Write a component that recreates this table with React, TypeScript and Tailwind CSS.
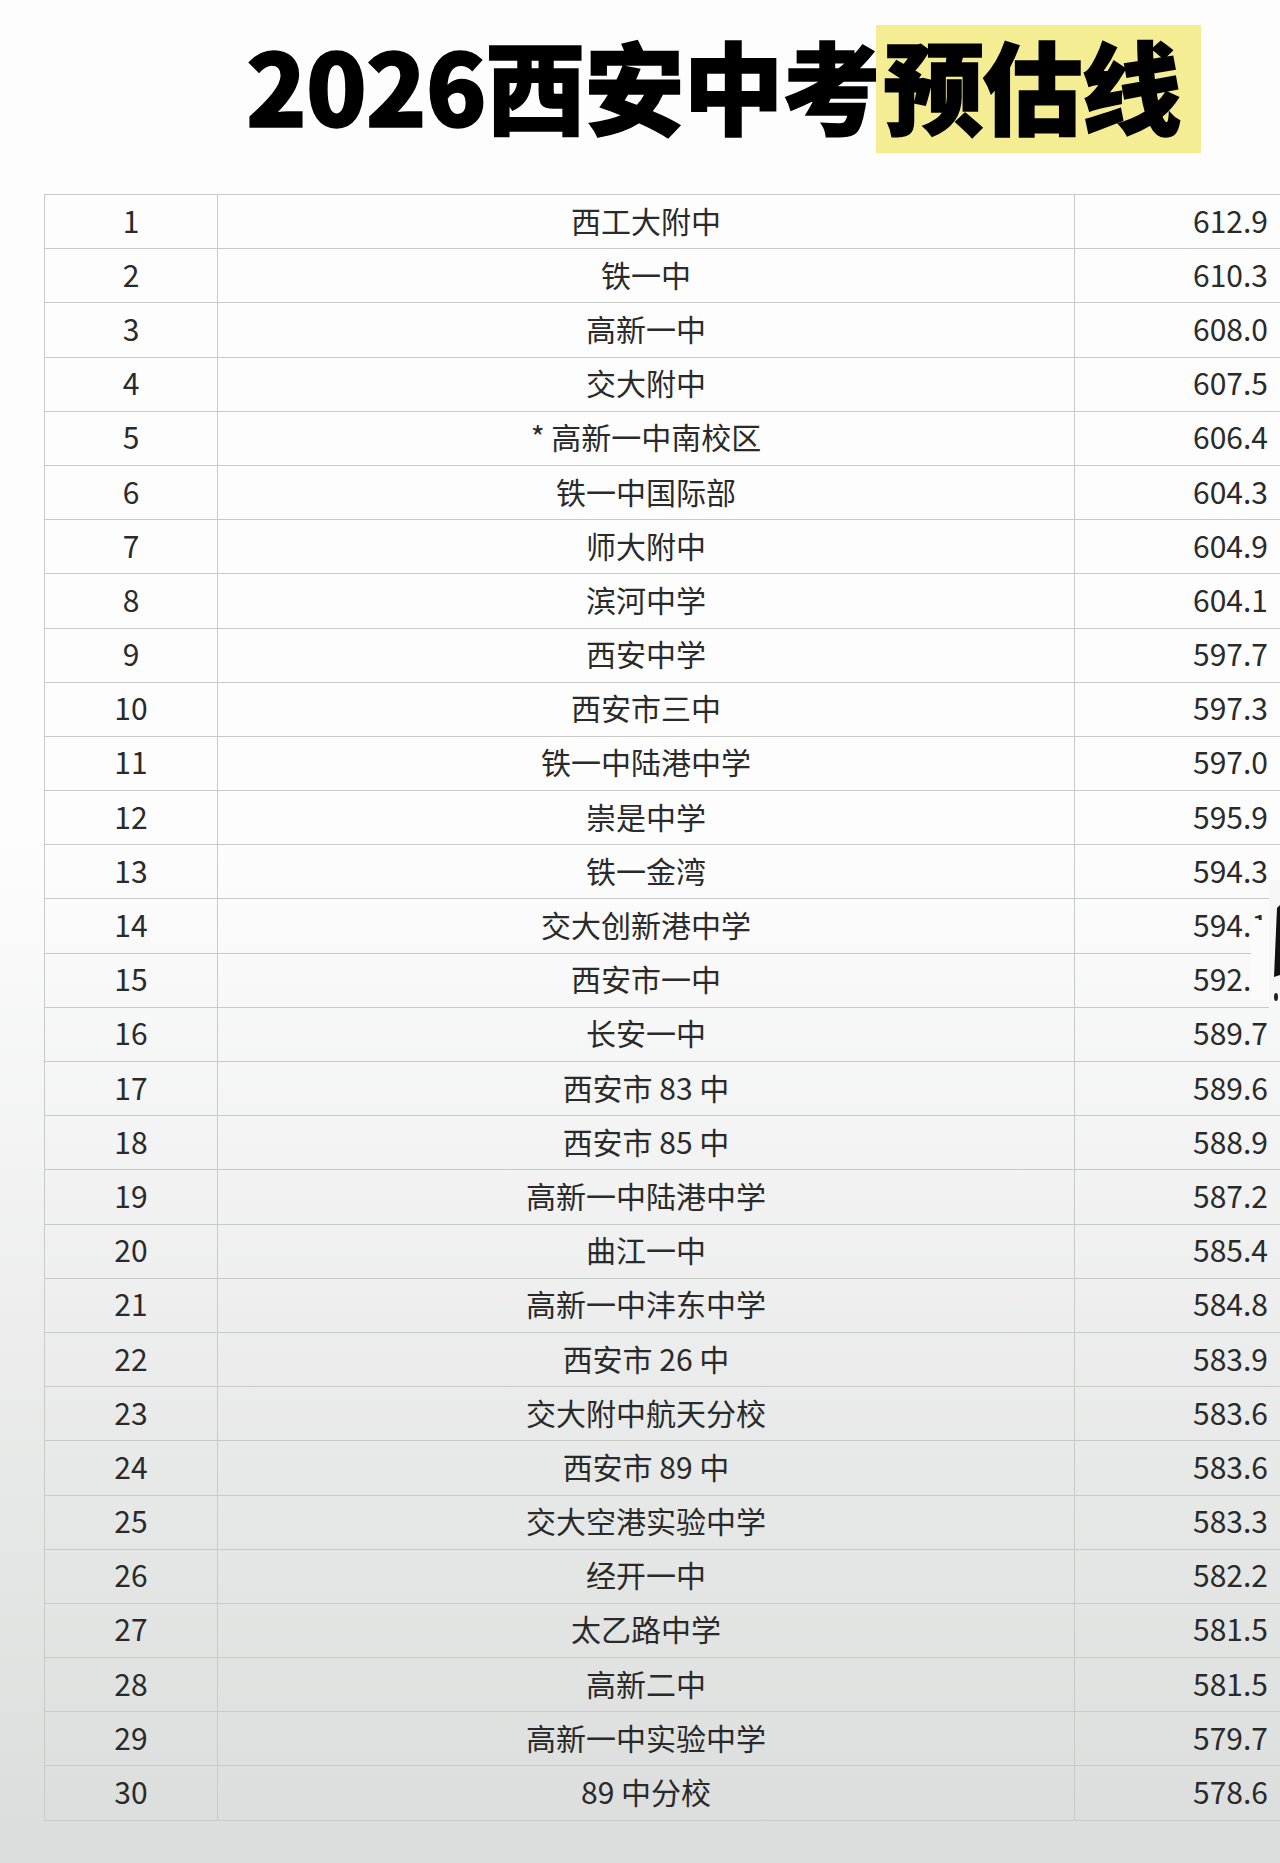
import React from "react";

const rows: [string, string][] = [
  ["西工大附中", "612.9"],
  ["铁一中", "610.3"],
  ["高新一中", "608.0"],
  ["交大附中", "607.5"],
  ["* 高新一中南校区", "606.4"],
  ["铁一中国际部", "604.3"],
  ["师大附中", "604.9"],
  ["滨河中学", "604.1"],
  ["西安中学", "597.7"],
  ["西安市三中", "597.3"],
  ["铁一中陆港中学", "597.0"],
  ["崇是中学", "595.9"],
  ["铁一金湾", "594.3"],
  ["交大创新港中学", "594.1"],
  ["西安市一中", "592.1"],
  ["长安一中", "589.7"],
  ["西安市 83 中", "589.6"],
  ["西安市 85 中", "588.9"],
  ["高新一中陆港中学", "587.2"],
  ["曲江一中", "585.4"],
  ["高新一中沣东中学", "584.8"],
  ["西安市 26 中", "583.9"],
  ["交大附中航天分校", "583.6"],
  ["西安市 89 中", "583.6"],
  ["交大空港实验中学", "583.3"],
  ["经开一中", "582.2"],
  ["太乙路中学", "581.5"],
  ["高新二中", "581.5"],
  ["高新一中实验中学", "579.7"],
  ["89 中分校", "578.6"],
];

export default function App() {
  return (
    <div
      className="relative w-[1280px] h-[1863px] overflow-hidden bg-linear-to-b from-[#fdfdfd] from-45% to-[#dadddb] text-[#2a2a2a]"
      style={{ fontFamily: '"Noto Sans CJK SC", "Noto Sans", sans-serif' }}
    >
      <div className="h-[194px] pt-[25px] pl-[246px]">
        <h1 className="flex items-start text-[100px] font-black leading-[118px] text-black tracking-[-1px] [-webkit-text-stroke:1.5px_black]">
          <span>2026西安中考</span>
          <span className="ml-[-6px] pl-[8px] pr-[20px] pb-[10px] bg-[#f4ed94]">预估线</span>
        </h1>
      </div>
      <div className="ml-[44px] w-[1238px] border-l border-t border-[#c8cac8]">
        {rows.map(([name, score], i) => (
          <div
            key={i}
            className="grid grid-cols-[173px_857px_1fr] h-[54.2px] border-b border-[#c8cac8] text-[30px] font-normal leading-none"
          >
            <div className="flex items-center justify-center pb-[4px] border-r border-[#c8cac8]">{i + 1}</div>
            <div className="flex items-center justify-center pb-[4px] border-r border-[#c8cac8] whitespace-pre">{name}</div>
            <div className="flex items-center justify-end pb-[4px] pr-[14px]">{score}</div>
          </div>
        ))}
      </div>
      {/* object covering the right edge around rows 14-15 */}
      <div className="absolute left-[1251px] top-[920px] w-[20px] h-[80px] bg-[#fbfbfb]" />
      <div className="absolute left-[1269px] top-[880px] w-[11px] h-[128px] bg-[#f7f7f7]" />
      <svg className="absolute left-[1272px] top-[905px]" width="8" height="100" viewBox="0 0 8 100">
        <polygon points="5,3 8,0 8,70 2,72" fill="#111" />
        <ellipse cx="4" cy="92" rx="2" ry="4" fill="#222" />
      </svg>
    </div>
  );
}
